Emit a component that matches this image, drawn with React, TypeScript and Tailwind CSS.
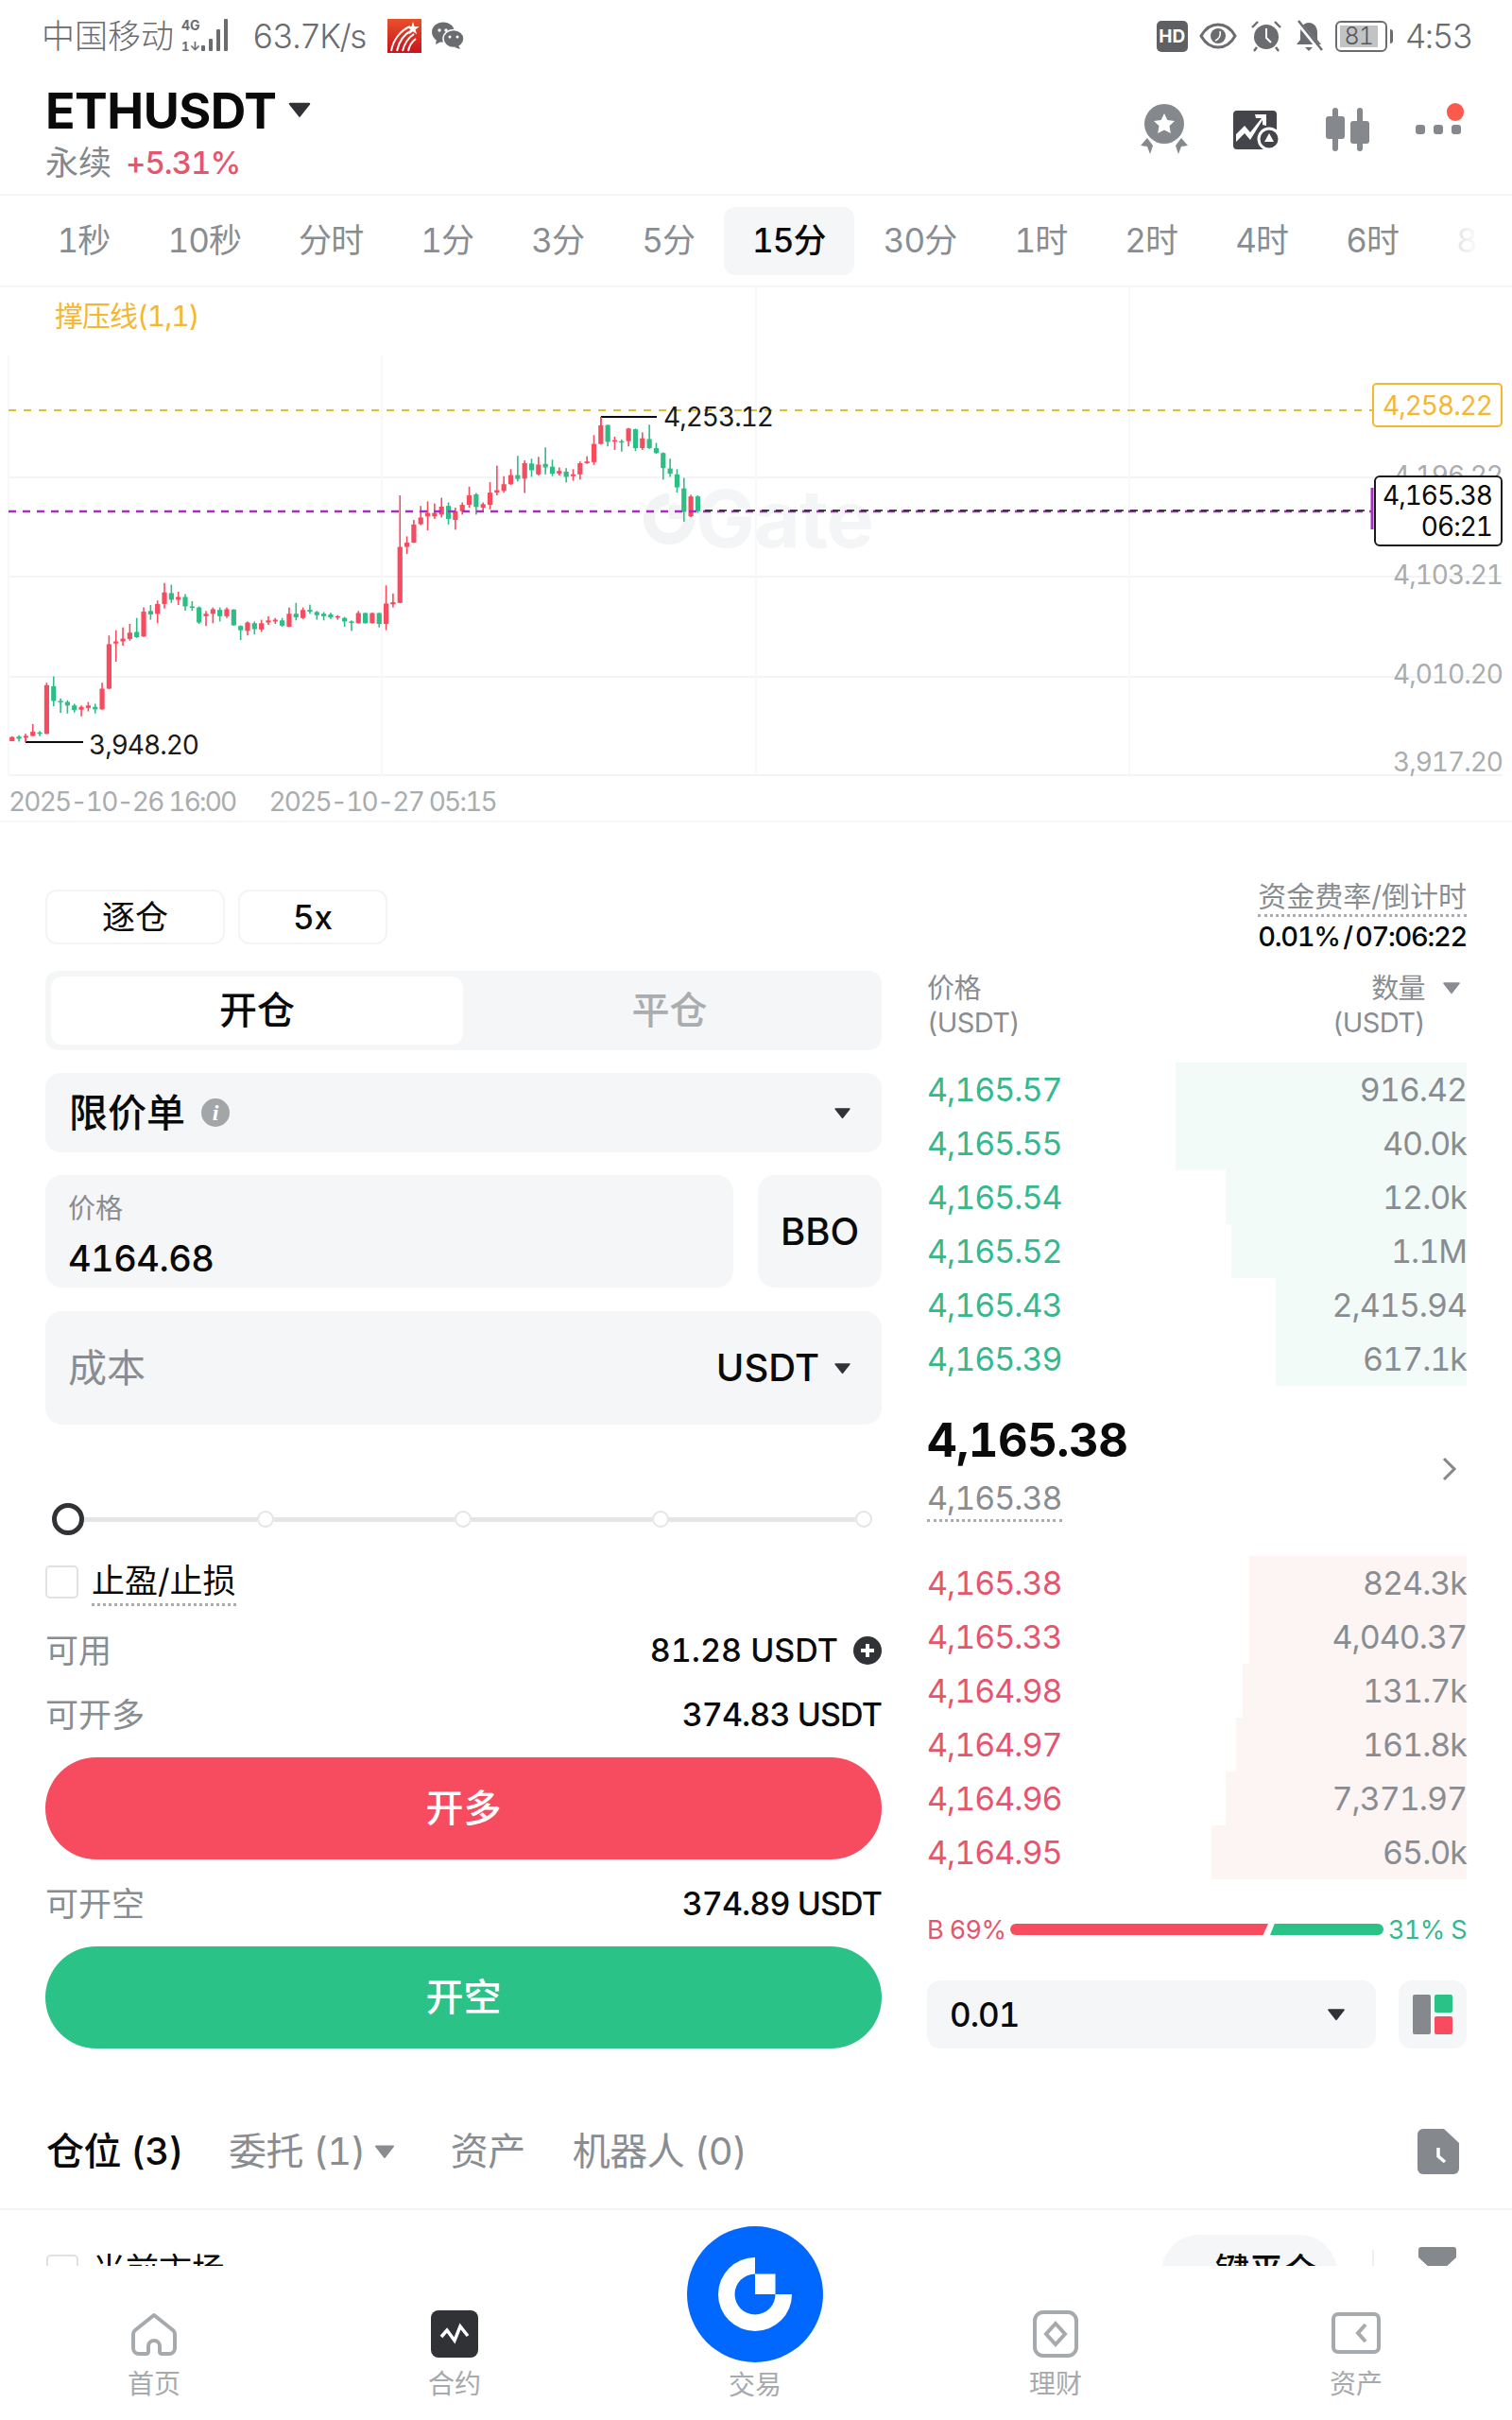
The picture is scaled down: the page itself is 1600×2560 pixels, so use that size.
const timeframes = ["1秒", "10秒", "分时", "1分", "3分", "5分", "15分", "30分", "1时", "2时", "4时", "6时", "8时"];

const asks = [
  { price: "4,165.57", size: "916.42", bar: 308 },
  { price: "4,165.55", size: "40.0k", bar: 308 },
  { price: "4,165.54", size: "12.0k", bar: 255 },
  { price: "4,165.52", size: "1.1M", bar: 249 },
  { price: "4,165.43", size: "2,415.94", bar: 202 },
  { price: "4,165.39", size: "617.1k", bar: 202 },
];

const bids = [
  { price: "4,165.38", size: "824.3k", bar: 230 },
  { price: "4,165.33", size: "4,040.37", bar: 230 },
  { price: "4,164.98", size: "131.7k", bar: 237 },
  { price: "4,164.97", size: "161.8k", bar: 244 },
  { price: "4,164.96", size: "7,371.97", bar: 255 },
  { price: "4,164.95", size: "65.0k", bar: 270 },
];

// r/g, wick top, body top, body bottom, wick bottom
const candles: [string, number, number, number, number][] = [
  ["r", 1293, 1295, 1307, 1307], ["g", 1290, 1294, 1300, 1308], ["r", 1290, 1292, 1297, 1310], ["r", 1258, 1280, 1292, 1293],
  ["g", 1278, 1282, 1285, 1293], ["r", 1140, 1147, 1286, 1287], ["g", 1122, 1150, 1192, 1207], ["g", 1185, 1192, 1196, 1226],
  ["g", 1190, 1195, 1205, 1228], ["g", 1200, 1205, 1218, 1225], ["r", 1205, 1209, 1217, 1236], ["r", 1195, 1205, 1212, 1222],
  ["g", 1200, 1209, 1216, 1228], ["r", 1140, 1157, 1216, 1217], ["r", 1005, 1030, 1157, 1158], ["r", 990, 1022, 1028, 1080],
  ["r", 982, 1014, 1022, 1034], ["r", 972, 997, 1015, 1020], ["g", 955, 995, 1010, 1012], ["r", 925, 937, 1008, 1009],
  ["g", 918, 935, 945, 960], ["r", 905, 915, 943, 970], ["r", 855, 882, 915, 928], ["g", 860, 884, 903, 912],
  ["r", 880, 895, 903, 918], ["g", 887, 895, 922, 934], ["g", 907, 922, 925, 935], ["g", 922, 925, 968, 972],
  ["r", 935, 943, 950, 978], ["r", 925, 930, 943, 970], ["g", 925, 932, 950, 965], ["r", 925, 930, 950, 955],
  ["g", 930, 931, 976, 977], ["g", 976, 978, 990, 1018], ["r", 965, 968, 992, 1005], ["g", 965, 970, 987, 1002],
  ["r", 960, 970, 988, 995], ["r", 950, 962, 968, 975], ["r", 955, 960, 965, 972], ["g", 955, 962, 977, 980],
  ["r", 925, 943, 980, 981], ["g", 912, 943, 953, 962], ["r", 925, 932, 955, 958], ["g", 917, 932, 937, 943],
  ["g", 935, 938, 947, 960], ["g", 938, 943, 950, 962], ["g", 940, 945, 953, 958], ["r", 947, 950, 953, 960],
  ["g", 952, 955, 965, 980], ["g", 962, 965, 968, 992], ["r", 935, 941, 970, 971], ["g", 940, 941, 970, 971],
  ["r", 940, 941, 970, 971], ["g", 940, 941, 972, 982], ["r", 862, 914, 972, 990], ["r", 885, 910, 916, 925],
  ["r", 605, 752, 912, 913], ["r", 722, 740, 752, 772], ["r", 675, 688, 740, 741], ["r", 635, 668, 687, 690],
  ["r", 622, 655, 665, 705], ["r", 628, 655, 665, 672], ["r", 612, 637, 660, 668], ["g", 625, 635, 672, 688],
  ["r", 640, 650, 675, 703], ["r", 625, 632, 650, 660], ["r", 580, 605, 632, 640], ["g", 598, 602, 638, 660],
  ["r", 625, 630, 640, 650], ["r", 567, 597, 632, 645], ["r", 520, 590, 597, 605], ["r", 550, 573, 592, 597],
  ["r", 530, 547, 573, 575], ["g", 492, 547, 558, 565], ["r", 505, 513, 557, 598], ["g", 500, 514, 533, 552],
  ["r", 495, 517, 545, 548], ["g", 468, 515, 525, 545], ["g", 503, 523, 543, 550], ["r", 525, 535, 543, 548],
  ["g", 527, 537, 552, 568], ["r", 530, 545, 550, 563], ["r", 508, 513, 545, 560], ["r", 493, 508, 513, 515],
  ["r", 433, 458, 510, 518], ["r", 380, 405, 458, 460], ["g", 403, 404, 452, 465], ["r", 437, 447, 450, 475],
  ["g", 445, 450, 452, 480], ["r", 412, 414, 450, 465], ["g", 414, 416, 470, 478], ["r", 425, 442, 470, 475],
  ["g", 403, 444, 470, 472], ["g", 455, 470, 484, 486], ["g", 482, 484, 527, 560], ["g", 500, 528, 543, 552],
  ["g", 530, 545, 582, 597], ["g", 555, 585, 652, 680], ["r", 603, 608, 665, 667], ["g", 605, 608, 650, 655],
];

function Caret({ className }: { className: string }) {
  return (
    <svg viewBox="0 0 20 16" className={className}>
      <path d="M1 1.5h18a1 1 0 0 1 .8 1.5L10.8 14.5a1 1 0 0 1-1.6 0L.2 3A1 1 0 0 1 1 1.5z" fill="currentColor" />
    </svg>
  );
}

function GateMark({ bg, fg }: { bg: string; fg: string }) {
  return (
    <svg viewBox="0 0 144 144" className="h-full w-full">
      <path d="M72 33V50.5H93.5V72H111A39 39 0 1 1 72 33Z" fill={fg} />
      <path d="M72 50.5A21.5 21.5 0 1 0 93.5 72H72Z" fill={bg} />
    </svg>
  );
}

function StatusBar() {
  return (
    <div className="flex h-[76px] items-center justify-between pl-[44px] pr-[42px] text-[#6a6c6f]">
      <div className="flex items-center">
        <span className="text-[35px] font-light leading-none">中国移动</span>
        <svg viewBox="0 0 54 40" className="ml-[8px] h-[40px] w-[54px]">
          <text x="0" y="14" fontSize="14" fontWeight="700" fill="#6a6c6f">4G</text>
          <text x="0" y="36" fontSize="13" fontWeight="700" fill="#6a6c6f">1↓</text>
          <rect x="21" y="30" width="4" height="6" rx="1" fill="#6a6c6f" />
          <rect x="29" y="23" width="4" height="13" rx="1" fill="#6a6c6f" />
          <rect x="37" y="13" width="4" height="23" rx="1" fill="#6a6c6f" />
          <rect x="45" y="2" width="4" height="34" rx="1" fill="#6a6c6f" />
        </svg>
        <span className="ml-[21px] text-[35px] font-light leading-none tracking-[-1.5px]">63.7K/s</span>
        <svg viewBox="0 0 36 36" className="ml-[23px] h-[36px] w-[36px]">
          <defs>
            <linearGradient id="appIcon" x1="0" y1="0" x2="0" y2="1">
              <stop offset="0" stopColor="#e8502a" />
              <stop offset="1" stopColor="#c8141e" />
            </linearGradient>
          </defs>
          <rect width="36" height="36" fill="url(#appIcon)" />
          <path d="M4 34C6 22 14 12 24 8" stroke="#fff" strokeWidth="2" fill="none" />
          <path d="M10 34C12 24 18 16 26 12" stroke="#fff" strokeWidth="2" fill="none" />
          <path d="M16 34C18 26 22 20 28 16" stroke="#fff" strokeWidth="2" fill="none" />
          <path d="M22 34C23 28 26 24 30 21" stroke="#fff" strokeWidth="2" fill="none" />
          <path d="M27 3l1.6 5 5 .3-4 3 1.4 5-4-3-4 3 1.5-5-4-3 5-.3z" fill="#fff" />
        </svg>
        <svg viewBox="0 0 34 30" className="ml-[11px] h-[30px] w-[34px]">
          <ellipse cx="12" cy="11" rx="12" ry="10.5" fill="#6a6c6f" />
          <path d="M5 18l-1 6 6-3z" fill="#6a6c6f" />
          <ellipse cx="23" cy="18" rx="11" ry="9.5" fill="#6a6c6f" stroke="#fff" strokeWidth="1.5" />
          <path d="M28 25l2 4-6-2z" fill="#6a6c6f" />
          <circle cx="8" cy="9" r="1.7" fill="#fff" />
          <circle cx="15" cy="9" r="1.7" fill="#fff" />
          <circle cx="19" cy="16" r="1.5" fill="#fff" />
          <circle cx="27" cy="16" r="1.5" fill="#fff" />
        </svg>
      </div>
      <div className="flex items-center">
        <div className="flex h-[33px] w-[33px] items-center justify-center rounded-[5px] bg-[#5e6063] text-[19px] font-bold leading-none text-white">HD</div>
        <svg viewBox="0 0 40 28" className="ml-[12px] h-[28px] w-[40px]">
          <path d="M2 14C7 5 13 2 20 2s13 3 18 12c-5 9-11 12-18 12S7 23 2 14z" fill="none" stroke="#6a6c6f" strokeWidth="3" />
          <circle cx="20" cy="14" r="8" fill="#6a6c6f" />
          <path d="M22 9c1 4-1 8-5 10" stroke="#fff" strokeWidth="1.6" fill="none" />
        </svg>
        <svg viewBox="0 0 34 34" className="ml-[14px] h-[34px] w-[34px]">
          <circle cx="17" cy="18" r="13" fill="#6a6c6f" />
          <path d="M17 9v10l5 5" stroke="#fff" strokeWidth="2" fill="none" />
          <path d="M2 8l6-6M32 8l-6-6M7 29l-3 4M27 29l3 4" stroke="#6a6c6f" strokeWidth="2.4" />
        </svg>
        <svg viewBox="0 0 32 34" className="ml-[12px] h-[34px] w-[32px]">
          <path d="M16 3c6 0 9 5 9 11v7l4 5H3l4-5v-7c0-6 3-11 9-11z" fill="#6a6c6f" />
          <path d="M12 29h8l-4 4z" fill="#6a6c6f" />
          <path d="M4 2l25 31" stroke="#fff" strokeWidth="5" />
          <path d="M5 1l25 31" stroke="#6a6c6f" strokeWidth="2.4" />
        </svg>
        <div className="ml-[12px] flex items-center">
          <div className="flex h-[33px] w-[55px] items-center rounded-[6px] border-2 border-[#6a6c6f] p-[3px]">
            <div className="flex h-full w-[40px] items-center justify-center bg-[#c2c3c5] text-[25px] font-light leading-none tracking-[-1px] text-[#55575a]">81</div>
          </div>
          <div className="ml-[3px] h-[15px] w-[3px] rounded-r bg-[#6a6c6f]" />
        </div>
        <span className="ml-[13px] text-[35px] font-light leading-none tracking-[-1.5px]">4:53</span>
      </div>
    </div>
  );
}

function Header() {
  return (
    <div className="flex h-[131px] items-start justify-between border-b-2 border-[#f3f4f5]">
      <div className="pl-[48px]">
        <div className="mt-[14px] flex h-[56px] items-center">
          <span className="text-[52px] font-bold leading-none tracking-[-0.5px] text-[#0a0a0a]">ETHUSDT</span>
          <Caret className="ml-[13px] mt-[-4px] h-[18px] w-[24px] text-[#303236]" />
        </div>
        <div className="mt-[8px] flex h-[36px] items-center">
          <span className="text-[35px] leading-none text-[#84888c]">永续</span>
          <span className="ml-[15px] text-[33px] font-medium leading-none tracking-[-1px] text-[#e5556d]">+5.31%</span>
        </div>
      </div>
      <div className="mt-[34px] flex items-center pr-[54px]">
        <svg viewBox="0 0 52 54" className="h-[54px] w-[52px]">
          <circle cx="26" cy="21" r="21" fill="#85888c" />
          <path d="M26 10l3.4 7 7.6 1-5.5 5.3 1.3 7.7L26 27.4 19.2 31l1.3-7.7L15 18l7.6-1z" fill="#fff" />
          <path d="M8 37L1 45l7 1 3 8 3-9z" fill="#85888c" transform="translate(0 -1)" />
          <path d="M44 37l7 8-7 1-3 8-3-9z" fill="#85888c" transform="translate(0 -1)" />
        </svg>
        <svg viewBox="0 0 50 41" className="ml-[47px] h-[41px] w-[50px]">
          <rect width="46" height="41" rx="4" fill="#43454a" />
          <path d="M3 25l9-9 6 7 12-15h-6l-1-4h12v12l-4-1v-5L18 31l-6-7-9 9z" fill="#fff" />
          <circle cx="38" cy="30" r="11" fill="#43454a" stroke="#fff" strokeWidth="3" />
          <path d="M38 24l5 9H33z" fill="#fff" />
        </svg>
        <svg viewBox="0 0 46 46" className="ml-[48px] h-[46px] w-[46px]">
          <rect x="7" y="0" width="6" height="46" rx="3" fill="#85888c" />
          <rect x="0" y="9" width="20" height="24" rx="3" fill="#85888c" />
          <rect x="33" y="0" width="6" height="46" rx="3" fill="#85888c" />
          <rect x="26" y="14" width="20" height="24" rx="3" fill="#85888c" />
        </svg>
        <div className="relative ml-[49px] flex h-[46px] w-[48px] items-center justify-between">
          <div className="h-[10px] w-[10px] rounded-[3px] bg-[#85888c]" />
          <div className="h-[10px] w-[10px] rounded-[3px] bg-[#85888c]" />
          <div className="h-[10px] w-[10px] rounded-[3px] bg-[#85888c]" />
          <div className="absolute right-[-3px] top-[-5px] h-[19px] w-[18px] rounded-full bg-[#fb5a4d]" />
        </div>
      </div>
    </div>
  );
}

function Timeframes() {
  return (
    <div className="relative flex h-[97px] items-center overflow-hidden border-b-2 border-[#f5f6f7] pl-[30px] tracking-[-0.9px]">
      {timeframes.map((t) => (
        <div
          key={t}
          className={
            t === "15分"
              ? "flex h-[72px] shrink-0 items-center rounded-[12px] bg-[#f5f6f7] px-[30.5px] text-[35px] font-medium leading-none text-[#0a0a0a]"
              : "flex h-[72px] shrink-0 items-center px-[30.5px] text-[35px] leading-none text-[#898d91]"
          }
        >
          {t}
        </div>
      ))}
      <div className="absolute bottom-0 right-0 top-0 w-[66px] bg-gradient-to-r from-white/70 via-white to-white" />
    </div>
  );
}

function ChartDrawing() {
  const cx = (i: number) => 12.76 + i * 7.33;
  const cy = (v: number) => v / 2.7 - 4;
  return (
    <svg viewBox="0 0 1600 566" className="absolute inset-0 h-[566px] w-[1600px]">
      <g stroke="#f3f4f5" strokeWidth="2">
        <path d="M9 201H1590M9 306H1590M9 412H1590M9 516H1590" />
      </g>
      <g stroke="#f7f8f8" strokeWidth="2">
        <path d="M9 72V516M404 72V516M800 0V516M1195 0V516" />
      </g>
      {candles.map(([c, wt, bt, bb, wb], i) => (
        <g key={i} fill={c === "r" ? "#f74b60" : "#2dbd85"}>
          <rect x={cx(i) - 0.8} y={cy(wt)} width="1.6" height={cy(wb) - cy(wt)} />
          <rect x={cx(i) - 2.6} y={cy(bt)} width="5.2" height={Math.max(cy(bb) - cy(bt), 1.5)} />
        </g>
      ))}
      <path d="M9 130H1452" stroke="#e3bd32" strokeWidth="2" strokeDasharray="8 8" />
      <path d="M9 237H1452" stroke="#a62fc0" strokeWidth="2.4" strokeDasharray="8 7" />
      <path d="M746 236H1452" stroke="#1a1a1a" strokeWidth="1.6" strokeDasharray="8 7" />
      <path d="M636 137H695M27 481H88" stroke="#0a0a0a" strokeWidth="2" />
      <path d="M636 137V150M27 481V472" stroke="#f74b60" strokeWidth="1.5" />
      <path d="M1452 212V256" stroke="#a62fc0" strokeWidth="3" />
    </svg>
  );
}

function Chart() {
  return (
    <div className="relative h-[566px] border-b-2 border-[#f5f6f7] text-[28px] leading-none tracking-[-1px]">
      <div className="absolute left-[658px] top-[201px] flex h-[88px] items-center text-[#f3f5f6]">
        <div className="h-[100px] w-[100px] shrink-0">
          <GateMark bg="#ffffff" fg="#f1f3f4" />
        </div>
        <span className="ml-[-22px] text-[84px] font-bold leading-none tracking-[-1px]">Gate</span>
      </div>
      <ChartDrawing />
      <span className="absolute left-[58px] top-[15px] text-[30px] text-[#f5b731]">撑压线(1,1)</span>
      <span className="absolute left-[702px] top-[123px] text-[#1a1a1a]">4,253.12</span>
      <span className="absolute left-[94px] top-[470px] text-[#1a1a1a]">3,948.20</span>
      <span className="absolute right-[10px] top-[185px] text-[#a9adb0]">4,196.22</span>
      <span className="absolute right-[10px] top-[290px] text-[#a9adb0]">4,103.21</span>
      <span className="absolute right-[10px] top-[395px] text-[#a9adb0]">4,010.20</span>
      <span className="absolute right-[10px] top-[488px] text-[#a9adb0]">3,917.20</span>
      <div className="absolute left-[1452px] top-[101px] flex h-[47px] w-[138px] items-center justify-center rounded-[5px] border-2 border-[#f5b731] bg-white text-[#f5b731]">4,258.22</div>
      <div className="absolute left-[1454px] top-[199px] flex h-[75px] w-[136px] flex-col items-end justify-center gap-[5px] rounded-[6px] border-2 border-[#1a1a1a] bg-white pr-[9px] text-[#0a0a0a]">
        <span>4,165.38</span>
        <span>06:21</span>
      </div>
      <div className="absolute left-[9px] top-[530px] flex gap-[35px] tracking-[-1.8px] text-[#a9adb0]">
        <span>2025-10-26 16:00</span>
        <span>2025-10-27 05:15</span>
      </div>
    </div>
  );
}

function InfoRow({ label, value }: { label: string; value: string }) {
  return (
    <div className="flex h-[40px] items-center justify-between">
      <span className="text-[35px] leading-none text-[#898d91]">{label}</span>
      <span className="text-[34px] font-medium leading-none tracking-[-0.9px] text-[#0a0a0a]">{value}</span>
    </div>
  );
}

function OrderForm() {
  return (
    <div className="ml-[48px] w-[885px] pt-[71px]">
      <div className="flex h-[58px] gap-[14px]">
        <div className="flex w-[190px] items-center justify-center rounded-[12px] border-2 border-[#f3f4f5] text-[35px] leading-none text-[#0a0a0a]">逐仓</div>
        <div className="flex w-[158px] items-center justify-center rounded-[12px] border-2 border-[#f3f4f5] text-[35px] font-medium leading-none text-[#0a0a0a]">5x</div>
      </div>

      <div className="mt-[28px] flex h-[84px] rounded-[14px] bg-[#f5f6f7] p-[6px]">
        <div className="flex w-[436px] items-center justify-center rounded-[12px] bg-white text-[40px] font-medium leading-none text-[#0a0a0a]">开仓</div>
        <div className="flex flex-1 items-center justify-center text-[40px] font-medium leading-none text-[#a9adb0]">平仓</div>
      </div>

      <div className="mt-[24px] flex h-[84px] items-center rounded-[16px] bg-[#f5f6f7] pl-[25px] pr-[33px]">
        <span className="text-[41px] font-medium leading-none text-[#0a0a0a]">限价单</span>
        <div className="ml-[17px] flex h-[30px] w-[30px] items-center justify-center rounded-full bg-[#a2a6a9] font-['Liberation_Serif',serif] text-[24px] font-bold italic leading-none text-white">i</div>
        <Caret className="ml-auto h-[13px] w-[17px] text-[#303236]" />
      </div>

      <div className="mt-[24px] flex h-[119px] gap-[26px]">
        <div className="flex flex-1 flex-col justify-center rounded-[18px] bg-[#f5f6f7] pl-[24px] pt-[8px]">
          <span className="text-[29px] leading-none text-[#898d91]">价格</span>
          <span className="mt-[19px] text-[38px] font-medium leading-none tracking-[-0.5px] text-[#0a0a0a]">4164.68</span>
        </div>
        <div className="flex w-[131px] items-center justify-center rounded-[18px] bg-[#f5f6f7] text-[40px] font-medium leading-none text-[#0a0a0a]">BBO</div>
      </div>

      <div className="mt-[25px] flex h-[120px] items-center rounded-[18px] bg-[#f5f6f7] pl-[24px] pr-[33px]">
        <span className="text-[41px] leading-none text-[#898d91]">成本</span>
        <span className="ml-auto text-[40px] font-medium leading-none text-[#0a0a0a]">USDT</span>
        <Caret className="ml-[16px] h-[13px] w-[17px] text-[#303236]" />
      </div>

      <div className="mt-[84px] flex h-[32px] items-center pl-[7px]">
        <div className="h-[34px] w-[34px] shrink-0 rounded-full border-[5px] border-[#303236] bg-white" />
        <div className="h-[5px] w-[183px] bg-[#e3e5e7]" />
        <div className="h-[18px] w-[18px] shrink-0 rounded-full border-2 border-[#e3e5e7] bg-white" />
        <div className="h-[5px] w-[191px] bg-[#e3e5e7]" />
        <div className="h-[18px] w-[18px] shrink-0 rounded-full border-2 border-[#e3e5e7] bg-white" />
        <div className="h-[5px] w-[191px] bg-[#e3e5e7]" />
        <div className="h-[18px] w-[18px] shrink-0 rounded-full border-2 border-[#e3e5e7] bg-white" />
        <div className="h-[5px] w-[197px] bg-[#e3e5e7]" />
        <div className="h-[18px] w-[18px] shrink-0 rounded-full border-2 border-[#e3e5e7] bg-white" />
      </div>

      <div className="mt-[33px] flex h-[35px] items-center">
        <div className="h-[35px] w-[35px] rounded-[5px] border-2 border-[#dfe1e3] bg-white" />
        <span className="ml-[14px] mt-[6px] border-b-[3px] border-dotted border-[#a9adb0] pb-[6px] text-[35px] leading-none text-[#0a0a0a]">止盈/止损</span>
      </div>

      <div className="mt-[35px] flex h-[40px] items-center justify-between">
        <span className="text-[35px] leading-none text-[#898d91]">可用</span>
        <div className="flex items-center">
          <span className="text-[34px] font-medium leading-none text-[#0a0a0a]">81.28 USDT</span>
          <svg viewBox="0 0 30 30" className="ml-[16px] h-[30px] w-[30px]">
            <circle cx="15" cy="15" r="15" fill="#303236" />
            <path d="M15 8v14M8 15h14" stroke="#fff" strokeWidth="4" />
          </svg>
        </div>
      </div>
      <div className="mt-[28px]">
        <InfoRow label="可开多" value="374.83 USDT" />
      </div>
      <div className="mt-[25px] flex h-[108px] items-center justify-center rounded-full bg-[#f74b60] text-[40px] font-medium leading-none text-white">开多</div>
      <div className="mt-[27px]">
        <InfoRow label="可开空" value="374.89 USDT" />
      </div>
      <div className="mt-[25px] flex h-[108px] items-center justify-center rounded-full bg-[#2bc287] text-[40px] font-medium leading-none text-white">开空</div>
    </div>
  );
}

function BookRow({ price, size, bar, side }: { price: string; size: string; bar: number; side: "ask" | "bid" }) {
  return (
    <div className="relative flex h-[57px] items-center justify-between tracking-[-1px]">
      <div
        className={side === "ask" ? "absolute bottom-0 right-0 top-0 bg-[#f3fbf9]" : "absolute bottom-0 right-0 top-0 bg-[#fdf5f4]"}
        style={{ width: bar }}
      />
      <span className={side === "ask" ? "relative text-[34px] leading-none text-[#35b88d]" : "relative text-[34px] leading-none text-[#e5566e]"}>{price}</span>
      <span className="relative text-[34px] leading-none text-[#898d91]">{size}</span>
    </div>
  );
}

function OrderBook() {
  return (
    <div className="ml-[48px] w-[571px] pt-[59px]">
      <div className="flex flex-col items-end">
        <span className="h-[41px] border-b-[3px] border-dotted border-[#a9adb0] text-[30px] leading-[38px] text-[#898d91]">资金费率/倒计时</span>
        <span className="mt-[3px] h-[36px] text-[29px] font-medium leading-[36px] tracking-[-1.3px] text-[#0a0a0a] [word-spacing:-3px]">0.01% / 07:06:22</span>
      </div>

      <div className="mt-[19px] flex h-[72px] justify-between text-[29px] leading-[36px] tracking-[-0.6px] text-[#898d91]">
        <div>
          <div>价格</div>
          <div>(USDT)</div>
        </div>
        <div className="flex flex-col items-end pr-[44px]">
          <div className="relative">
            数量
            <Caret className="absolute left-[76px] top-[10px] h-[14px] w-[18px] text-[#898d91]" />
          </div>
          <div>(USDT)</div>
        </div>
      </div>

      <div className="mt-[24px]">
        {asks.map((r) => (
          <BookRow key={r.price} {...r} side="ask" />
        ))}
      </div>

      <div className="mt-[30px] flex h-[114px] items-center justify-between">
        <div>
          <div className="h-[56px] text-[49px] font-bold leading-[56px] tracking-[-0.5px] text-[#0a0a0a]">4,165.38</div>
          <div className="mt-[16px] h-[42px] w-fit border-b-[3px] border-dotted border-[#a9adb0] text-[34px] leading-[34px] tracking-[-1px] text-[#898d91]">4,165.38</div>
        </div>
        <svg viewBox="0 0 16 26" className="mr-[10px] mt-[2px] h-[26px] w-[16px]">
          <path d="M2 2l11 11L2 24" fill="none" stroke="#84888c" strokeWidth="3" />
        </svg>
      </div>

      <div className="mt-[36px]">
        {bids.map((r) => (
          <BookRow key={r.price} {...r} side="bid" />
        ))}
      </div>

      <div className="mt-[33px] flex h-[40px] items-center text-[27px] leading-none">
        <span className="w-[88px] shrink-0 tracking-[-0.6px] text-[#e5566e]">B 69%</span>
        <div className="h-[12px] w-[273px] rounded-l-full bg-[#f74b60] [clip-path:polygon(0_0,100%_0,98%_100%,0_100%)]" />
        <div className="ml-[2px] h-[12px] w-[120px] rounded-r-full bg-[#2bc287] [clip-path:polygon(4%_0,100%_0,100%_100%,0_100%)]" />
        <span className="ml-auto tracking-[-0.6px] text-[#35b88d]">31% S</span>
      </div>

      <div className="mt-[34px] flex h-[72px] gap-[24px]">
        <div className="flex flex-1 items-center justify-between rounded-[14px] bg-[#f5f6f7] pl-[24px] pr-[33px]">
          <span className="text-[35px] font-medium leading-none tracking-[-1px] text-[#0a0a0a]">0.01</span>
          <Caret className="h-[14px] w-[18px] text-[#303236]" />
        </div>
        <div className="flex w-[72px] items-center justify-center rounded-[14px] bg-[#f5f6f7]">
          <svg viewBox="0 0 42 42" className="h-[42px] w-[42px]">
            <rect width="19" height="42" rx="2" fill="#85888c" />
            <rect x="23" width="19" height="19" rx="2" fill="#2bc287" />
            <rect x="23" y="23" width="19" height="19" rx="2" fill="#f74b60" />
          </svg>
        </div>
      </div>
    </div>
  );
}

function PositionTabs() {
  return (
    <div className="mt-[49px] flex h-[122px] items-center border-b-2 border-[#f3f4f5] pl-[49px] pr-[56px] text-[40px] leading-none tracking-[-0.5px]">
      <span className="font-medium text-[#0a0a0a]">仓位 (3)</span>
      <span className="ml-[48px] text-[#898d91]">委托 (1)</span>
      <Caret className="ml-[10px] h-[16px] w-[20px] text-[#898d91]" />
      <span className="ml-[60px] text-[#898d91]">资产</span>
      <span className="ml-[50px] text-[#898d91]">机器人 (0)</span>
      <svg viewBox="0 0 44 48" className="ml-auto h-[48px] w-[44px]">
        <path d="M6 0h22l16 15v27a6 6 0 0 1-6 6H6a6 6 0 0 1-6-6V6a6 6 0 0 1 6-6z" fill="#85888c" />
        <path d="M22 20v9l7 6" fill="none" stroke="#fff" strokeWidth="3.5" />
      </svg>
    </div>
  );
}

function PeekRow() {
  return (
    <div className="flex h-[59px] items-start overflow-hidden pl-[49px] pr-[59px]">
      <div className="mt-[47px] h-[34px] w-[34px] shrink-0 rounded-[5px] border-2 border-[#dfe1e3]" />
      <span className="ml-[15px] mt-[46px] text-[35px] leading-none text-[#0a0a0a]">当前市场</span>
      <div className="ml-auto mt-[26px] flex h-[80px] w-[186px] items-start justify-center rounded-full bg-[#f5f6f7] pt-[20px] text-[36px] font-medium leading-none text-[#0a0a0a]">一键平仓</div>
      <div className="ml-[37px] mt-[42px] h-[30px] w-[2px] bg-[#eceef0]" />
      <svg viewBox="0 0 40 40" className="ml-[47px] mt-[39px] h-[40px] w-[40px] shrink-0">
        <path d="M3 0h34a3 3 0 0 1 3 3v8L26 24v14H14V24L0 11V3a3 3 0 0 1 3-3z" fill="#85888c" />
      </svg>
    </div>
  );
}

function BottomNav() {
  return (
    <div className="relative grid h-[163px] grid-cols-5 bg-white pl-[4px] pr-[6px]">
      <div className="flex flex-col items-center pt-[49px]">
        <svg viewBox="0 0 48 46" className="h-[46px] w-[48px]">
          <path d="M24 3L4 19c-1 1-2 2-2 4v15a6 6 0 0 0 6 6h8c1 0 2-1 2-2v-6a6 6 0 0 1 12 0v6c0 1 1 2 2 2h8a6 6 0 0 0 6-6V23c0-2-1-3-2-4z" fill="none" stroke="#a7aaad" strokeWidth="4" strokeLinejoin="round" />
        </svg>
        <span className="mt-[15px] text-[28px] leading-[30px] text-[#a7aaad]">首页</span>
      </div>
      <div className="flex flex-col items-center pt-[47px]">
        <svg viewBox="0 0 50 50" className="h-[50px] w-[50px]">
          <rect width="50" height="50" rx="8" fill="#303236" />
          <path d="M11 28l6-7 8 11 6-15 8 10" fill="none" stroke="#fff" strokeWidth="3.5" />
        </svg>
        <span className="mt-[13px] text-[28px] leading-[30px] text-[#a7aaad]">合约</span>
      </div>
      <div className="flex flex-col items-center pt-[111px]">
        <div className="absolute left-[727px] top-[-42px] h-[144px] w-[144px] rounded-full bg-[#0068ff]">
          <GateMark bg="#0068ff" fg="#ffffff" />
        </div>
        <span className="text-[28px] leading-[30px] text-[#a7aaad]">交易</span>
      </div>
      <div className="flex flex-col items-center pt-[47px]">
        <svg viewBox="0 0 48 50" className="h-[50px] w-[48px]">
          <rect x="2" y="2" width="44" height="46" rx="9" fill="none" stroke="#a7aaad" strokeWidth="4" />
          <path d="M24 14l10 11-10 11-10-11z" fill="none" stroke="#a7aaad" strokeWidth="4" />
        </svg>
        <span className="mt-[13px] text-[28px] leading-[30px] text-[#a7aaad]">理财</span>
      </div>
      <div className="flex flex-col items-center pt-[49px]">
        <svg viewBox="0 0 52 44" className="h-[44px] w-[52px]">
          <rect x="2" y="2" width="48" height="40" rx="5" fill="none" stroke="#a7aaad" strokeWidth="4" />
          <path d="M36 13l-8 9 8 9" fill="none" stroke="#a7aaad" strokeWidth="4" />
        </svg>
        <span className="mt-[17px] text-[28px] leading-[30px] text-[#a7aaad]">资产</span>
      </div>
    </div>
  );
}

export default function App() {
  return (
    <div className="h-[2560px] w-[1600px] overflow-hidden bg-white font-['Inter','Noto_Sans_CJK_SC',sans-serif] tabular-nums">
      <StatusBar />
      <Header />
      <Timeframes />
      <Chart />
      <div className="flex">
        <OrderForm />
        <OrderBook />
      </div>
      <PositionTabs />
      <PeekRow />
      <BottomNav />
    </div>
  );
}
